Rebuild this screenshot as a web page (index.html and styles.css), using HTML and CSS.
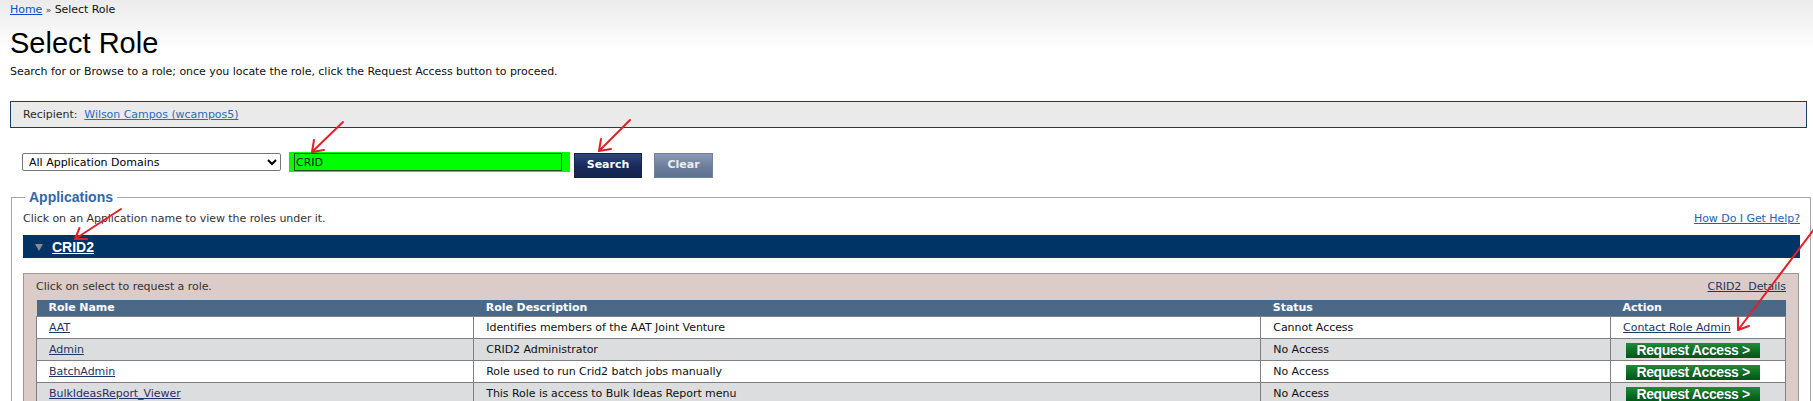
FILE: index.html
```html
<!DOCTYPE html>
<html lang="en">
<head>
<meta charset="utf-8">
<title>Select Role</title>
<link rel="stylesheet" href="styles.css">
</head>
<body>
<div class="page">
  <div class="crumb"><a href="#">Home</a> <span class="sep">»</span> Select Role</div>
  <h1 class="title">Select Role</h1>
  <p class="intro">Search for or Browse to a role; once you locate the role, click the Request Access button to proceed.</p>
  <div class="recipient"><span class="recipient-label">Recipient:</span><a href="#">Wilson Campos (wcampos5)</a></div>
  <div class="search">
    <select class="domain"><option>All Application Domains</option></select>
    <span class="hilite"><input class="query" type="text" value="CRID"></span>
    <button class="btn btn-search" type="button">Search</button>
    <button class="btn btn-clear" type="button">Clear</button>
  </div>
  <fieldset class="apps">
    <legend>Applications</legend>
    <div class="apps-head"><span>Click on an Application name to view the roles under it.</span><a class="help" href="#">How Do I Get Help?</a></div>
    <div class="appbar">
      <svg class="tri" width="8" height="7" viewBox="0 0 8 7"><polygon points="0,0 8,0 4,7" fill="#8a8a8a"/></svg>
      <a href="#">CRID2</a>
    </div>
    <div class="panel">
      <div class="panel-head"><span>Click on select to request a role.</span><a href="#">CRID2&nbsp; Details</a></div>
      <table class="roles">
        <colgroup><col class="c1"><col class="c2"><col class="c3"><col class="c4"></colgroup>
        <thead>
          <tr><th>Role Name</th><th>Role Description</th><th>Status</th><th>Action</th></tr>
        </thead>
        <tbody>
          <tr><td><a href="#">AAT</a></td><td>Identifies members of the AAT Joint Venture</td><td>Cannot Access</td><td><a href="#">Contact Role Admin</a></td></tr>
          <tr class="alt"><td><a href="#">Admin</a></td><td>CRID2 Administrator</td><td>No Access</td><td><span class="req">Request Access &gt;</span></td></tr>
          <tr><td><a href="#">BatchAdmin</a></td><td>Role used to run Crid2 batch jobs manually</td><td>No Access</td><td><span class="req">Request Access &gt;</span></td></tr>
          <tr class="alt"><td><a href="#">BulkIdeasReport_Viewer</a></td><td>This Role is access to Bulk Ideas Report menu</td><td>No Access</td><td><span class="req">Request Access &gt;</span></td></tr>
        </tbody>
      </table>
    </div>
  </fieldset>
</div>
<svg class="annot" width="1813" height="401" viewBox="0 0 1813 401">
  <g fill="none" stroke="#e3202a" stroke-width="2" stroke-linecap="round" stroke-linejoin="round">
    <path d="M343 122 L312 152 M324 150 L312 152 L314 140"/>
    <path d="M630 120 L599 151 M611 149 L599 151 L601 139"/>
    <path d="M121 209 L75 239 M87 239 L75 239 L79.5 228"/>
    <path d="M1815 228 L1738 330 M1749 326 L1738 330 L1738 318"/>
  </g>
</svg>
</body>
</html>
```
FILE: styles.css
```css
html, body {
  margin: 0;
  padding: 0;
}
body {
  background: #ffffff linear-gradient(#ebebeb 0px, #ffffff 50px) no-repeat;
  font-family: "DejaVu Sans", Verdana, sans-serif;
  font-size: 11px;
  letter-spacing: -0.05px;
  color: #111;
  position: relative;
  height: 401px;
  overflow: hidden;
}
a {
  color: #1f3562;
}
.page {
  padding-left: 10px;
}
.crumb {
  padding-top: 3px;
  line-height: 14px;
}
.crumb a {
  color: #0b4fc4;
}
.sep {
  font-size: 9px;
  color: #444;
}
.title {
  margin: 10px 0 0;
  font-family: "Liberation Sans", Arial, sans-serif;
  font-weight: normal;
  font-size: 29px;
  line-height: 32px;
  letter-spacing: 0;
  color: #000;
}
.intro {
  margin: 6px 0 0;
  line-height: 14px;
}
.recipient {
  margin: 22px 6px 0 0;
  height: 25px;
  line-height: 25px;
  border: 1px solid #1f3b5d;
  background: #ebeaea;
  padding-left: 12px;
  color: #2a2a2a;
}
.recipient-label {
  margin-right: 7px;
}
.recipient a {
  color: #2a6bbd;
}
.search {
  margin-top: 24px;
  display: flex;
  align-items: flex-start;
  height: 26px;
}
.domain {
  margin: 1px 0 0 12px;
  width: 259px;
  height: 18px;
  font-family: "DejaVu Sans", Verdana, sans-serif;
  font-size: 11px;
  color: #000;
  border: 1px solid #767676;
  border-radius: 2px;
  background: #fff;
  padding: 0 0 0 2px;
}
.hilite {
  margin-left: 8px;
  display: block;
  background: #00ff00;
  padding: 1px 8px 1px 5px;
}
.query {
  display: block;
  box-sizing: border-box;
  width: 268px;
  height: 18px;
  margin: 0;
  padding: 0 0 0 1px;
  border: 1px solid #264a26;
  background: transparent;
  font-family: "DejaVu Sans", Verdana, sans-serif;
  font-size: 11px;
  color: #111;
  outline: none;
}
.btn {
  margin-top: 1px;
  height: 25px;
  padding: 0 0 2px;
  font-family: "DejaVu Sans", Verdana, sans-serif;
  font-weight: bold;
  font-size: 11px;
  border-radius: 0;
}
.btn-search {
  margin-left: 4px;
  width: 68px;
  color: #fff;
  border: 1px solid #12244a;
  background: linear-gradient(#2f4878, #17295a 55%, #13244c);
}
.btn-clear {
  margin-left: 12px;
  width: 59px;
  color: #e9ecf1;
  border: 1px solid #6f80a0;
  background: linear-gradient(#8a9ab3, #6b7e9c 55%, #5e7190);
}
.apps {
  margin: 11px 2px 0 1px;
  border: 1px solid #a5a5a5;
  padding: 7px 10px 10px 11px;
  min-width: 0;
}
.apps legend {
  margin-left: 2px;
  padding: 0 4px;
  font-family: "Liberation Sans", Arial, sans-serif;
  font-weight: bold;
  font-size: 14px;
  line-height: 16px;
  letter-spacing: 0;
  color: #2f68a6;
}
.apps-head {
  display: flex;
  justify-content: space-between;
  line-height: 14px;
  color: #333;
}
.help {
  color: #1762c0;
}
.appbar {
  margin-top: 9px;
  height: 23px;
  background: #003366;
  display: flex;
  align-items: center;
  padding-left: 12px;
}
.tri {
  display: block;
  margin-right: 9px;
  margin-top: 1px;
}
.appbar a {
  color: #fff;
  font-family: "Liberation Sans", Arial, sans-serif;
  font-weight: bold;
  font-size: 14px;
  line-height: 16px;
  letter-spacing: 0;
}
.panel {
  margin-top: 15px;
  margin-right: 1px;
  border: 1px solid #9a9a9a;
  background: #dbccc9;
  padding: 6px 12px 0;
}
.panel-head {
  display: flex;
  justify-content: space-between;
  line-height: 14px;
  color: #333;
}
.panel-head a {
  color: #1f3562;
}
.roles {
  margin-top: 6px;
  width: 100%;
  table-layout: fixed;
  border-collapse: collapse;
}
.c1 { width: 25%; }
.c2 { width: 45%; }
.c3 { width: 20%; }
.c4 { width: 10%; }
.roles th {
  background: #4b6986;
  color: #fff;
  font-weight: bold;
  text-align: left;
  padding: 0 12px;
  height: 16px;
  line-height: 16px;
}
.roles td {
  border: 1px solid #808080;
  padding: 0 12px;
  height: 21px;
  line-height: 21px;
  background: #fff;
  white-space: nowrap;
  overflow: hidden;
}
.roles tr.alt td {
  background: #dcdddf;
}
.req {
  display: inline-block;
  vertical-align: middle;
  margin-left: 3px;
  width: 134px;
  height: 15px;
  line-height: 15px;
  text-align: center;
  color: #fff;
  font-family: "Liberation Sans", Arial, sans-serif;
  font-weight: bold;
  font-size: 14px;
  letter-spacing: -0.4px;
  background: linear-gradient(#1f8d36, #0b6a20 60%, #005516);
  text-shadow: 0 0 1px #033;
}
.annot {
  position: absolute;
  top: 0;
  left: 0;
  pointer-events: none;
}
```
